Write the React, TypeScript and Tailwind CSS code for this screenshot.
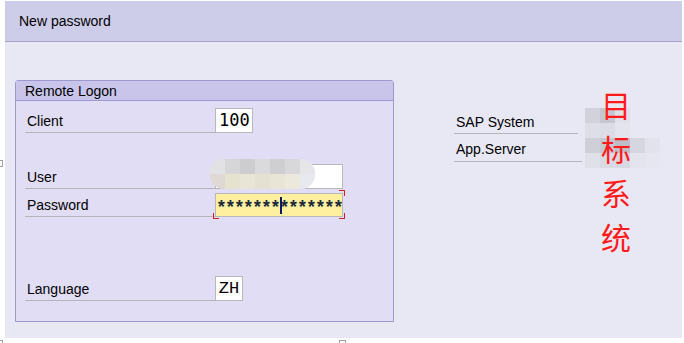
import React from "react";

const font = { fontFamily: '"Liberation Sans", Arial, sans-serif' };

function Row({ label, children, top }: { label: string; children?: React.ReactNode; top: string }) {
  return (
    <div className={`flex items-end ${top}`}>
      <div className="w-[190px] h-[25px] border-b border-[#b4b4bc] flex items-center pl-[2px] pt-[3px] text-[14px] text-black">
        {label}
      </div>
      {children}
    </div>
  );
}

function Mosaic({ cells, cols, size, className }: { cells: string[]; cols: number; size: number; className: string }) {
  return (
    <div
      className={`absolute grid ${className}`}
      style={{ gridTemplateColumns: `repeat(${cols}, ${size}px)`, gridAutoRows: `${size}px` }}
    >
      {cells.map((c, i) => (
        <div key={i} style={{ background: c }} />
      ))}
    </div>
  );
}

export default function App() {
  return (
    <div className="relative w-[684px] h-[343px] bg-white overflow-hidden" style={font}>
      <div className="ml-[5px] mr-[2px] mt-[1px] w-[677px]">
        <div className="h-[41px] bg-[#cecde9] border-b border-[#a3a3c6] flex items-center pl-[14px] text-[14px] text-black">
          New password
        </div>
        <div className="h-[296px] bg-[#e8e8f5] flex pl-[10px] pt-[38px]">
          {/* group box */}
          <div className="w-[379px] h-[242px] border border-[#9e98d0] rounded-t-[3px] bg-[#e0ddf4] flex flex-col">
            <div className="h-[20px] bg-[#c9c5ea] border-b border-[#9e98d0] flex items-center pl-[9px] pt-[1px] text-[14px] text-black">
              Remote Logon
            </div>
            <div className="flex flex-col pl-[9px]">
              <Row label="Client" top="mt-[7px]">
                <div className="w-[38px] h-[25px] bg-white border border-[#b8b8b8] flex items-center pl-[3px] text-[17px] text-black" style={{ fontFamily: '"DejaVu Sans Mono", monospace' }}>
                  100
                </div>
              </Row>
              <Row label="User" top="mt-[31px]">
                <div className="w-[128px] h-[25px] bg-white border border-[#b8b8b8]" />
              </Row>
              <Row label="Password" top="mt-[3px]">
                <div className="relative w-[128px] h-[24px] bg-[#fff0a0] border border-[#b8b8b8] overflow-visible">
                  <div className="overflow-hidden h-full flex items-center pt-[5px] text-[18px] font-bold text-[#1a2a3a] leading-none" style={{ fontFamily: '"Liberation Mono", monospace', letterSpacing: "-1.8px" }}>
                    **************
                  </div>
                  <div className="absolute left-[64px] top-[3px] w-[2px] h-[17px] bg-[#0a1a6a]" />
                  <div className="absolute -left-[3px] -bottom-[3px] w-[6px] h-[6px] border-l border-b border-[#d02020]" />
                  <div className="absolute -right-[3px] -bottom-[3px] w-[6px] h-[6px] border-r border-b border-[#d02020]" />
                  <div className="absolute -right-[3px] -top-[4px] w-[6px] h-[6px] border-r border-t border-[#d02020]" />
                </div>
              </Row>
              <Row label="Language" top="mt-[59px]">
                <div className="w-[28px] h-[25px] bg-white border border-[#b8b8b8] flex items-center justify-center text-[17px] text-black" style={{ fontFamily: '"Liberation Mono", monospace' }}>
                  ZH
                </div>
              </Row>
            </div>
          </div>
          {/* right side */}
          <div className="ml-[60px] mt-[29px] flex flex-col">
            <div className="w-[124px] h-[25px] border-b border-[#b4b4bc] flex items-center pl-[2px] pt-[3px] text-[14px] text-black">
              SAP System
            </div>
            <div className="w-[128px] h-[28px] border-b border-[#b4b4bc] flex items-center pl-[2px] pt-[3px] text-[14px] text-black">
              App.Server
            </div>
          </div>
        </div>
      </div>

      {/* mosaics */}
      <Mosaic
        className="left-[210px] top-[159px] rounded-[14px] overflow-hidden"
        cols={7}
        size={15}
        cells={[
          "#e2e2e4", "#d6d6d8", "#cdcdcf", "#dadadc", "#cfcfd1", "#d8d8da", "#e6e6e8",
          "#e0d8d2", "#e6e2d0", "#e8e4d6", "#e4e0d2", "#e8e4d6", "#ece8dc", "#e8e8f0",
        ]}
      />
      <Mosaic
        className="left-[585px] top-[108px]"
        cols={5}
        size={15}
        cells={[
          "#d2d2dc", "#c6c6d0", "#e0e0ea", "#e8e8f5", "#e8e8f5",
          "#dedee8", "#dcdce6", "#e4e4ee", "#e8e8f5", "#e8e8f5",
          "#cfcfda", "#c8c8d2", "#bebec8", "#d6d6e0", "#e2e2ec",
          "#e0e0ea", "#dadae4", "#d8d8e2", "#e4e4ee", "#e6e6f0",
        ]}
      />

      {/* annotation */}
      <div
        className="absolute left-[601px] top-[82px] flex flex-col text-[30px] leading-[44px] text-[#ff1a1a]"
        style={{ fontFamily: '"Noto Sans CJK SC", "Noto Sans", sans-serif' }}
      >
        <span>目</span>
        <span>标</span>
        <span>系</span>
        <span>统</span>
      </div>

      {/* small artifacts */}
      <div className="absolute -left-[4px] top-[160px] w-[7px] h-[7px] border border-[#a0a0a0] bg-white" />
      <div className="absolute -left-[4px] top-[340px] w-[7px] h-[7px] border border-[#a0a0a0] bg-white" />
      <div className="absolute left-[339px] top-[340px] w-[7px] h-[7px] border border-[#a0a0a0] bg-white" />
    </div>
  );
}
